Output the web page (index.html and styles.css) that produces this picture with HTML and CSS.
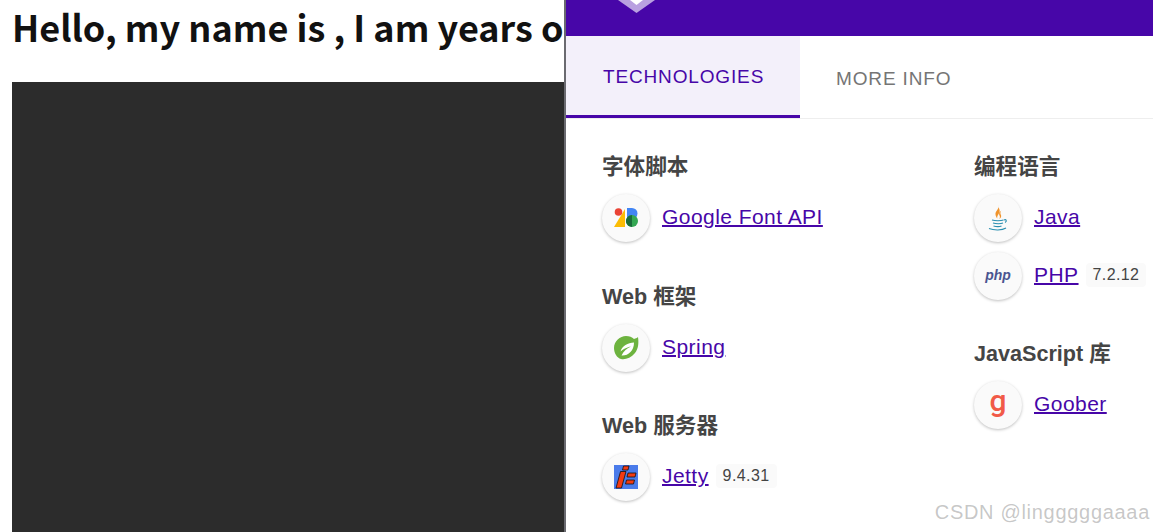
FILE: index.html
```html
<!DOCTYPE html>
<html lang="zh">
<head>
<meta charset="utf-8">
<title>Technologies</title>
<link rel="stylesheet" href="styles.css">
</head>
<body>
<main class="page">
  <h1 class="hello">Hello, my name is , I am years old</h1>
  <div class="stage"></div>
</main>
<aside class="panel">
  <header class="bar">
    <svg class="logo" width="37" height="14" viewBox="0 0 37 14"><path d="M0 0H37L18.500 13Z" fill="#b9a0e0"/><path d="M12 0H25L18.500 5Z" fill="#fff"/></svg>
  </header>
  <nav class="tabs">
    <div class="tab tab-on">TECHNOLOGIES</div>
    <div class="tab">MORE INFO</div>
  </nav>
  <div class="cols">
    <div class="col col-a">
      <section class="group">
        <h2>字体脚本</h2>
        <div class="item">
          <span class="ico"><svg width="24" height="20" viewBox="0 0 24 20"><path d="M0 19 11 1V19Z" fill="#fbbc04"/><circle cx="4.500" cy="4" r="3.800" fill="#ea4335"/><path d="M13 0h5a5.500 5.500 0 0 1 0 11H13Z" fill="#4285f4"/><circle cx="18" cy="13" r="6" fill="#34a853"/><path d="M13 9.700a6 6 0 0 0 0 6.600 6 6 0 0 0 5 2.700V7a6 6 0 0 0-5 2.700Z" fill="#1a6b3a"/></svg></span>
          <a href="#">Google Font API</a>
        </div>
      </section>
      <section class="group">
        <h2>Web 框架</h2>
        <div class="item">
          <span class="ico"><svg width="25" height="24" viewBox="0 0 25 24"><path d="M24 1c1 7 0 12-3 16-4 5-10 7-14 6C3 22 0 17 0 12 0 5 6 0 12 0c3.500 0 6 1 8 3 1.500-.5 3-1 4-2Z" fill="#6db33f"/><path d="M20 6.500C14 7 8 9.500 6.500 15.500 11 12 14 11 17 10.500 13 12.500 9.500 15 7.500 19.500 14 20 20 15 20 6.500Z" fill="#fff"/></svg></span>
          <a href="#">Spring</a>
        </div>
      </section>
      <section class="group">
        <h2>Web 服务器</h2>
        <div class="item">
          <span class="ico"><svg width="24" height="24" viewBox="0 0 24 24"><rect width="24" height="24" fill="#4a7bea"/><path d="M9.500 1H15l-1 4H8.500ZM6.500 6.500H12L7.500 23H2Z" fill="#f33a12" stroke="#111" stroke-width=".8"/><path d="M14 8h8l-1 4h-8ZM12.500 15h8l-1 4h-8Z" fill="#f33a12" stroke="#111" stroke-width=".8"/></svg></span>
          <a href="#">Jetty</a><span class="ver">9.4.31</span>
        </div>
      </section>
    </div>
    <div class="col col-b">
      <section class="group">
        <h2>编程语言</h2>
        <div class="item">
          <span class="ico"><svg width="22" height="26" viewBox="0 0 22 26"><path d="M11.500 0c1.200 4-3.500 6-3 9.500.3 2 1.300 3.500 1.800 4-.8-3.500 3.700-5.500 2-9.500C11.800 3 11.500 1.500 11.500 0Zm3 5.500c-2.500 1.500-3 3.500-1.800 5.500.4 1 .2 2-.5 3 2-1 2.600-3 1.300-5-.3-1.300 0-2.500 1-3.500Z" fill="#f0932b"/><path d="M5 15c3 1 9 1 11.500 0M6 18c3 1 8 1 10 0M6.500 21c3 .8 6 .8 8 0M2 23.500c5 2 13 2 17-.5M17 15c2-1 3.500 1 1 2.500" fill="none" stroke="#2b8fb0" stroke-width="1.100"/></svg></span>
          <a href="#">Java</a>
        </div>
        <div class="item">
          <span class="ico"><span class="php">php</span></span>
          <a href="#">PHP</a><span class="ver">7.2.12</span>
        </div>
      </section>
      <section class="group">
        <h2>JavaScript 库</h2>
        <div class="item">
          <span class="ico"><span class="goober">g</span></span>
          <a href="#">Goober</a>
        </div>
      </section>
    </div>
  </div>
</aside>
<div class="mark">CSDN @lingggggaaaa</div>
</body>
</html>
```

FILE: styles.css
```css
html, body { margin: 0; height: 100%; overflow: hidden; background: #fff; }
.page { padding: 0 0 0 12px; }
.hello {
  margin: 0;
  height: 82px;
  padding-top: 1px;
  box-sizing: border-box;
  font: 700 36px/50px "Noto Sans CJK SC", "Noto Sans", sans-serif;
  color: #111;
  white-space: nowrap;
  overflow: hidden;
}
.stage { height: 450px; background: #2c2c2c; }
.panel {
  position: absolute;
  top: 0; right: 0; bottom: 0;
  left: 564px;
  background: #fff;
  border-left: 2px solid #6a6a70;
  font-family: "Liberation Sans", "Noto Sans CJK SC", sans-serif;
}
.bar { height: 36px; background: #4706a8; display: flex; justify-content: flex-start; padding-left: 52px; }
.logo { display: block; }
.tabs { display: flex; height: 83px; box-sizing: border-box; border-bottom: 1px solid #eee; }
.tab {
  padding: 0 36px;
  font-size: 19px;
  letter-spacing: .85px;
  color: #757575;
  line-height: 86px;
}
.tab-on {
  width: 234px;
  padding: 0 37px;
  box-sizing: border-box;
  height: 82px;
  background: #f3f0fa;
  color: #4706a8;
  border-bottom: 3px solid #4706a8;
  line-height: 82px;
}
.cols { display: flex; padding: 33px 0 0 36px; }
.col { flex: none; }
.col-a { width: 372px; }
.group { margin-bottom: 39.7px; }
.col-b .group { margin-bottom: 38.5px; }
.group h2 {
  margin: 0 0 13px;
  padding-top: 1px;
  font-size: 21.6px;
  line-height: 28px;
  font-weight: 700;
  color: #454545;
}
.item { display: flex; align-items: center; height: 48px; margin-bottom: 10px; }
.ico {
  flex: none;
  width: 48px; height: 48px;
  margin-right: 12px;
  border-radius: 50%;
  background: #fafafa;
  box-shadow: 0 1px 3px rgba(0,0,0,.25);
  display: flex; align-items: center; justify-content: center;
}
.item a {
  position: relative;
  top: -1px;
  color: #4706a8;
  font-size: 21px;
  letter-spacing: .45px;
  text-decoration: underline;
  text-decoration-thickness: 2px;
}
.ver {
  margin-left: 7px;
  padding: 2px 7px;
  background: #fafafa;
  border-radius: 4px;
  color: #444;
  font-size: 16px;
  letter-spacing: .4px;
  line-height: 20px;
  position: relative;
  top: -1px;
}
.php { font: italic 700 14px "Liberation Sans", sans-serif; color: #4a5590; position: relative; top: -1px; }
.goober { font: 500 30px/30px "Roboto", sans-serif; color: #f15a48; position: relative; top: -4px; }
.mark {
  position: absolute;
  right: 3px; bottom: 6px;
  font: 20px/28px "Liberation Sans", sans-serif;
  color: rgba(120,120,120,.42);
  letter-spacing: .7px;
  white-space: nowrap;
}
```
